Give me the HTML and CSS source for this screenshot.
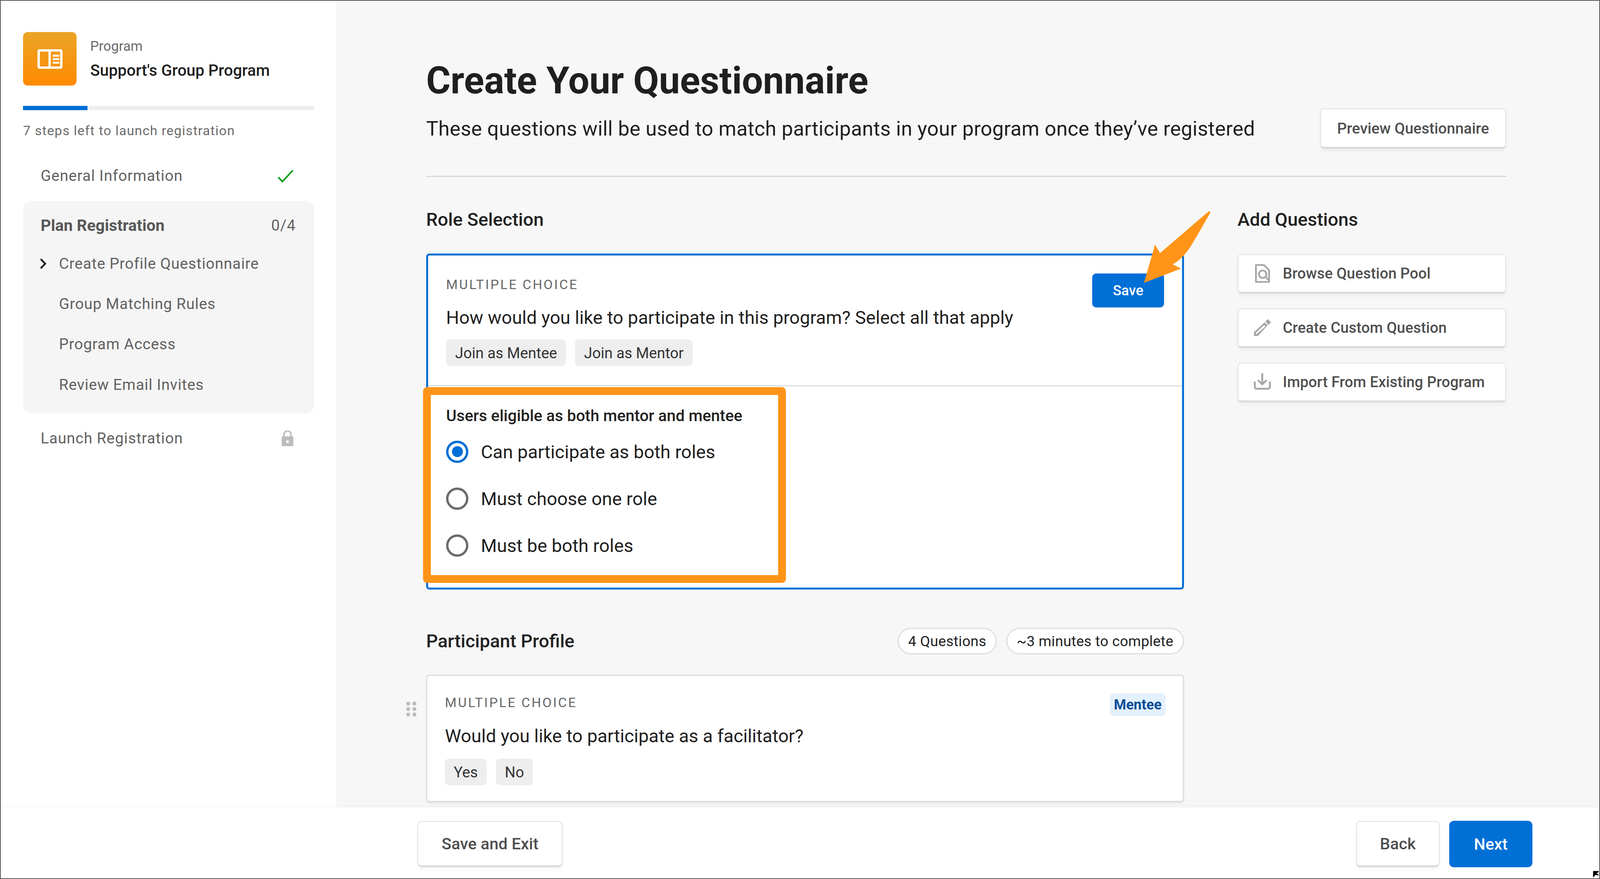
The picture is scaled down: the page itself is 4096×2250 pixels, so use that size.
FILE: index.html
```html
<!DOCTYPE html>
<html lang="en">
<head>
<meta charset="utf-8">
<title>Create Your Questionnaire</title>
<link rel="stylesheet" href="styles.css">
</head>
<body>
<div class="window">
  <div class="upper">
    <aside class="sidebar">
      <div class="program">
        <div class="logo">
          <svg class="logo-icon" viewBox="0 0 64 50" fill="none">
            <rect x="3" y="3" width="58" height="44" rx="2" stroke="#fff" stroke-width="6"/>
            <rect x="28" y="3" width="6" height="44" fill="#fff"/>
            <rect x="39" y="14" width="17" height="5" fill="#fff"/>
            <rect x="39" y="23" width="17" height="5" fill="#fff"/>
            <rect x="39" y="32" width="17" height="5" fill="#fff"/>
          </svg>
        </div>
        <div class="program-text">
          <div class="program-label">Program</div>
          <div class="program-name">Support's Group Program</div>
        </div>
      </div>
      <div class="progress"><div class="progress-fill"></div></div>
      <div class="steps-left">7 steps left to launch registration</div>
      <div class="nav-row nav-general">
        <span>General Information</span>
        <svg class="check" viewBox="0 0 40 32" fill="none"><path d="M2 19l10 11L38 2" stroke="#0a9f1a" stroke-width="4"/></svg>
      </div>
      <div class="panel">
        <div class="panel-head"><span class="panel-title">Plan Registration</span><span>0/4</span></div>
        <div class="sub active">
          <svg class="chevron" viewBox="0 0 18 27" fill="none"><path d="M3 2l11 11.5L3 25" stroke="#222" stroke-width="4.500"/></svg>
          <span>Create Profile Questionnaire</span>
        </div>
        <div class="sub">Group Matching Rules</div>
        <div class="sub">Program Access</div>
        <div class="sub">Review Email Invites</div>
      </div>
      <div class="nav-row nav-launch">
        <span>Launch Registration</span>
        <svg class="lock" viewBox="0 0 32 40"><path d="M7 16v-6a9 9 0 0 1 18 0v6" fill="none" stroke="#bdbdbd" stroke-width="4"/><path fill-rule="evenodd" fill="#bdbdbd" d="M3 15h26a2 2 0 0 1 2 2v21a2 2 0 0 1-2 2H3a2 2 0 0 1-2-2V17a2 2 0 0 1 2-2zm13 10a3.500 3.500 0 1 0 0 7 3.500 3.500 0 0 0 0-7z"/></svg>
      </div>
    </aside>
    <main class="main">
      <h1 class="title">Create Your Questionnaire</h1>
      <div class="subtitle-row">
        <p class="subtitle">These questions will be used to match participants in your program once they’ve registered</p>
        <button class="btn preview-btn">Preview Questionnaire</button>
      </div>
      <hr class="rule">
      <div class="columns">
        <section class="left">
          <h2 class="heading role-heading">Role Selection</h2>
          <div class="card card-active">
            <div class="card-top">
              <div class="card-type">MULTIPLE CHOICE</div>
              <div class="card-q">How would you like to participate in this program? Select all that apply</div>
              <div class="chips"><span class="chip">Join as Mentee</span><span class="chip">Join as Mentor</span></div>
              <button class="save">Save</button>
            </div>
            <div class="card-options">
              <div class="opt-label">Users eligible as both mentor and mentee</div>
              <label class="radio-row"><span class="radio radio-on"></span>Can participate as both roles</label>
              <label class="radio-row"><span class="radio"></span>Must choose one role</label>
              <label class="radio-row"><span class="radio"></span>Must be both roles</label>
            </div>
            <div class="highlight"></div>
          </div>
          <div class="profile-head">
            <h2 class="heading">Participant Profile</h2>
            <div class="pills"><span class="pill">4 Questions</span><span class="pill">~3 minutes to complete</span></div>
          </div>
          <div class="card card-q2">
            <div class="drag"><i></i><i></i><i></i><i></i><i></i><i></i></div>
            <div class="card-type">MULTIPLE CHOICE</div>
            <div class="card-q">Would you like to participate as a facilitator?</div>
            <div class="chips"><span class="chip">Yes</span><span class="chip">No</span></div>
            <span class="badge">Mentee</span>
          </div>
        </section>
        <section class="right">
          <h2 class="heading add-heading">Add Questions</h2>
          <button class="btn add-btn">
            <svg class="add-icon" viewBox="0 5 110 110" fill="none" stroke="#a6a6a6" stroke-width="7" stroke-linejoin="round">
              <path d="M27 26h32l21 21v47H27z"/>
              <circle cx="54" cy="63" r="15"/>
              <path d="M67 75l13 13"/>
            </svg>
            Browse Question Pool
          </button>
          <button class="btn add-btn">
            <svg class="add-icon" viewBox="0 4 110 110">
              <path fill="#a6a6a6" d="M75 24l12 13-9 11-13-15z"/>
              <path fill="#a6a6a6" fill-rule="evenodd" d="M62 37l12 12-39 43H19V77zM60 48L26 80l4 5 35-32z"/>
            </svg>
            Create Custom Question
          </button>
          <button class="btn add-btn">
            <svg class="add-icon" viewBox="0 4 110 110" fill="none" stroke="#a6a6a6" stroke-width="7.500">
              <path d="M52.500 23v46"/>
              <path d="M37 53l15.500 15L68 53" stroke-linecap="round"/>
              <path d="M22.500 57v22a7 7 0 0 0 7 7h46.500a7 7 0 0 0 7-7V57"/>
            </svg>
            Import From Existing Program
          </button>
        </section>
      </div>
    </main>
  </div>
  <footer class="footer">
    <button class="btn foot-btn save-exit">Save and Exit</button>
    <div class="foot-right">
      <button class="btn foot-btn back">Back</button>
      <button class="foot-btn next">Next</button>
    </div>
  </footer>
  <svg class="arrow" viewBox="0 0 182 190"><path fill="#ff9419" d="M10.600 186L39 88l12.400 22L175 4c3-2 6-1 5 3Q150 60 137.700 80 112 125 83.800 138.500L105.400 149.500z"/></svg>
  <svg class="cursor" viewBox="0 0 62 58"><rect x="33" y="25" width="29" height="33" fill="#fff"/><path fill="#000" d="M37 29h23v4l-8 5 8 7v2h-5l-8-2-9 10h-1z"/></svg>
</div>
</body>
</html>
```
FILE: styles.css
```css
* { box-sizing: border-box; }
html, body { margin: 0; padding: 0; background: #fff; }
body { font-family: Roboto, "Liberation Sans", sans-serif; color: #1f1f1f; }
.window {
  position: relative; width: 4096px; height: 2250px; overflow: hidden;
  display: flex; flex-direction: column; border: 2px solid #5a5a5a;
}
.upper { flex: 1; display: flex; min-height: 0; }
.sidebar { width: 859px; flex: none; padding: 80px 57px 0 57px; background: #fff; }
.program { display: flex; align-items: center; gap: 35px; }
.logo {
  width: 137px; height: 137px; border-radius: 12px; flex: none;
  background: linear-gradient(#eba427, #ff8a00);
  display: flex; align-items: center; justify-content: center;
}
.logo-icon { width: 64px; height: 50px; }
.program-label { font-size: 35px; color: #6b6b6b; line-height: 44px; padding-top: 2px; }
.program-name { font-size: 40.800px; font-weight: 500; color: #1f1f1f; line-height: 54px; margin-top: 12px; }
.progress { height: 11px; background: #eee; margin-top: 52px; }
.progress-fill { width: 165px; height: 100%; background: #006fd6; }
.steps-left { font-size: 34px; color: #6b6b6b; letter-spacing: 1.300px; line-height: 44px; margin-top: 30px; }
.nav-row { display: flex; align-items: center; justify-content: space-between; padding-left: 45px; font-size: 39px; color: #616161; letter-spacing: 1px; }
.nav-general { margin-top: 69px; padding-right: 52px; line-height: 50px; }
.check { width: 42px; height: 33px; }
.panel { background: #f5f5f5; border-radius: 23px; margin-top: 39px; height: 545px; padding: 38px 47px 0 45px; font-size: 39px; color: #616161; letter-spacing: .9px; }
.panel-head { display: flex; justify-content: space-between; line-height: 50px; }
.panel-title { font-size: 41px; font-weight: 700; color: #585858; letter-spacing: 0; }
.sub { height: 103.300px; display: flex; align-items: center; padding-left: 47px; position: relative; }
.panel-head + .sub { margin-top: 21px; }
.chevron { position: absolute; left: -3px; top: 38px; width: 19px; height: 28px; }
.nav-launch { margin-top: 38px; padding-right: 52px; line-height: 50px; }
.lock { width: 32px; height: 40px; }

.main { flex: 1; background: #f7f7f7; padding: 146px 238px 0 230px; min-width: 0; overflow: hidden; }
.title { margin: 0; font-size: 95.700px; font-weight: 700; line-height: 116px; color: #1f1f1f; }
.subtitle-row { display: flex; justify-content: space-between; align-items: center; margin-top: 13px; }
.subtitle { margin: 0; font-size: 52px; color: #1f1f1f; letter-spacing: .3px; }
.btn {
  background: #fff; border: 3px solid #e6e9eb; border-bottom: 5px solid #d8dcdf; border-radius: 10px;
  box-shadow: 0 8px 10px rgba(0,0,0,.03); color: #4f4f4f; font-family: inherit; font-weight: 500;
}
.preview-btn { width: 477px; height: 104px; font-size: 38.800px; padding: 0; }
.rule { border: 0; height: 3px; background: #d9d9d9; margin: 69px 0 0; }
.columns { display: flex; justify-content: space-between; }
.left { width: 1940px; flex: none; }
.right { width: 688px; flex: none; display: flex; flex-direction: column; }
.heading { margin: 0; font-size: 47px; font-weight: 500; line-height: 56px; color: #222; }
.role-heading, .add-heading { margin-top: 81px; }
.role-heading { margin-bottom: 59px; }
.add-heading { margin-bottom: 60px; }
.card { position: relative; background: #fff; border-radius: 8px; }
.card-active { border: 5px solid #006fd6; height: 860px; }
.card-top { position: relative; height: 335px; padding: 52px 44px 0 46px; border-bottom: 3px solid #ddd; }
.card-type { font-size: 34px; color: #666; letter-spacing: 3.700px; line-height: 44px; }
.card-q { font-size: 46.800px; color: #1f1f1f; line-height: 60px; margin-top: 33px; }
.chips { display: flex; gap: 23px; margin-top: 26px; }
.chip { background: #eee; border-radius: 10px; height: 68px; padding: 0 23px; display: flex; align-items: center; font-size: 38.300px; color: #333; }
.save {
  position: absolute; right: 46px; top: 46px; width: 184px; height: 87px; border: 0; border-radius: 10px;
  background: #006fd6; color: #fff; font-family: inherit; font-size: 36px; font-weight: 500;
}
.card-options { padding: 50px 0 0 46px; }
.opt-label { font-size: 40.800px; font-weight: 500; color: #222; line-height: 50px; margin-bottom: 7px; }
.radio-row { display: flex; align-items: center; gap: 32px; height: 120px; font-size: 47px; color: #1f1f1f; }
.radio { width: 57px; height: 57px; border-radius: 50%; border: 6px solid #6b6b6b; flex: none; background: #fff; }
.radio-on { border-color: #006fd6; position: relative; }
.radio-on::after { content: ""; position: absolute; inset: 8.500px; border-radius: 50%; background: #006fd6; }
.highlight { position: absolute; left: -13px; top: 337px; width: 929px; height: 501px; border: 20px solid #ff9419; border-radius: 10px; }
.profile-head { display: flex; justify-content: space-between; align-items: center; margin-top: 98px; height: 68px; }
.pills { display: flex; gap: 24px; }
.pill { background: #fff; border: 3px solid #ddd; border-radius: 40px; height: 68px; padding: 0 24px; display: flex; align-items: center; font-size: 37px; color: #222; letter-spacing: .35px; }
.card-q2 { margin-top: 52px; height: 326px; padding: 46px 48px 0 45px; border: 3px solid #ddd; box-shadow: 0 3px 4px rgba(0,0,0,.08); }
.card-q2 .card-q { margin-top: 34px; }
.card-q2 .chips { margin-top: 28px; gap: 24px; }
.card-q2 .chip { padding: 0 22.500px; }
.badge { position: absolute; right: 44px; top: 45px; height: 58px; width: 143px; display: flex; align-items: center; justify-content: center; background: #e3f1fc; border-radius: 10px; color: #0a4d96; font-size: 36px; font-weight: 700; }
.drag { position: absolute; left: -54px; top: 66px; width: 26px; display: grid; grid-template-columns: 10px 10px; grid-auto-rows: 10px; gap: 4px 6px; }
.drag i { background: #bbb; border-radius: 50%; }
.add-btn { height: 102px; margin-bottom: 37px; display: flex; align-items: center; gap: 16px; padding: 0 0 0 27px; font-size: 38.200px; letter-spacing: .1px; }
.add-icon { width: 70px; height: 70px; flex: none; }

.footer { position: relative; height: 181px; flex: none; background: #fff; box-shadow: 0 -6px 14px rgba(0,0,0,.025); display: flex; align-items: center; justify-content: space-between; padding: 6px 171px 0 1066px; }
.foot-right { display: flex; gap: 24px; }
.foot-btn { height: 119px; border-radius: 12px; font-size: 41.500px; font-weight: 500; font-family: inherit; }
.save-exit { width: 373px; }
.back { width: 215px; }
.next { width: 213px; background: #006fd6; color: #fff; border: 0; }
.arrow { position: absolute; left: 2916px; top: 536px; width: 182px; height: 190px; }
.cursor { position: absolute; right: 0; bottom: 0; width: 39px; height: 37px; }
```
